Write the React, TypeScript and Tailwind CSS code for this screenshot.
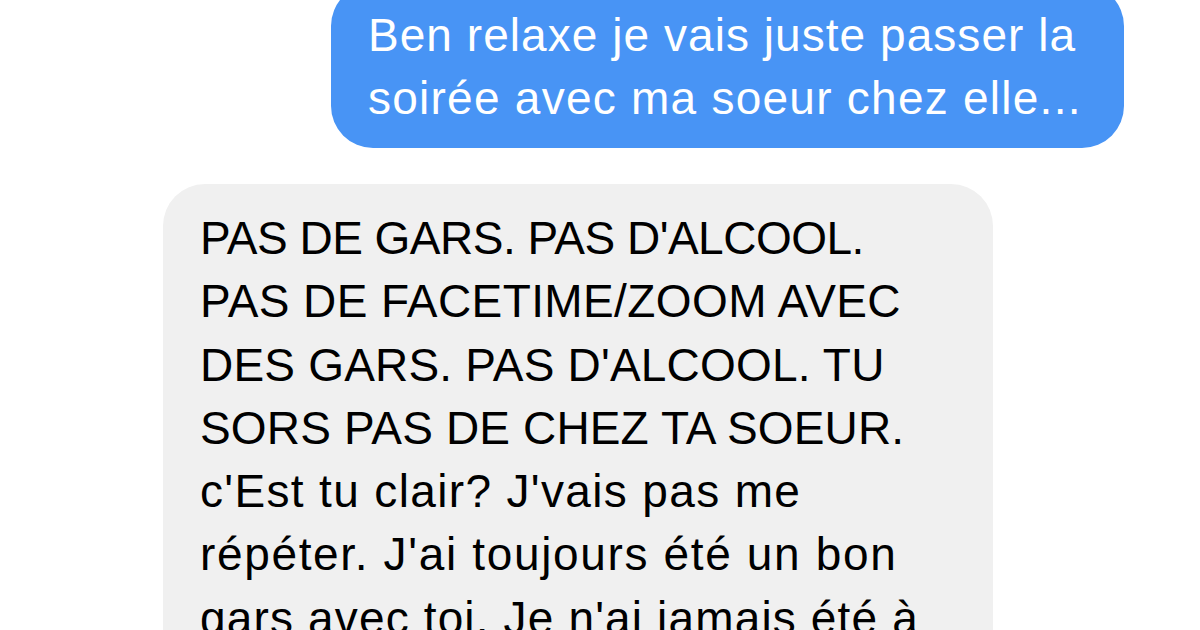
const sent = ["Ben relaxe je vais juste passer la", "soirée avec ma soeur chez elle..."];

// per-line tracking so each line ends where the screenshot's does
const received = [
  { t: "PAS DE GARS. PAS D'ALCOOL.", cls: "tracking-[-0.5px]" },
  { t: "PAS DE FACETIME/ZOOM AVEC", cls: "tracking-[0.4px]" },
  { t: "DES GARS. PAS D'ALCOOL. TU", cls: "tracking-[0.2px]" },
  { t: "SORS PAS DE CHEZ TA SOEUR.", cls: "tracking-[0.15px]" },
  { t: "c'Est tu clair? J'vais pas me", cls: "tracking-[1.35px]" },
  { t: "répéter. J'ai toujours été un bon", cls: "tracking-[1.65px]" },
  { t: "gars avec toi. Je n'ai jamais été à", cls: "tracking-[1.15px]" },
  { t: "toi de décider quoi faire.", cls: "tracking-[1.2px]" },
];

export default function App() {
  return (
    <div
      className="w-[1200px] h-[630px] overflow-hidden bg-white"
      style={{ fontFamily: '"Liberation Sans", Arial, sans-serif' }}
    >
      <div className="flex flex-col">
        {/* outgoing bubble */}
        <div className="flex justify-end pr-[76px] -mt-[16px]">
          <div className="w-[793px] rounded-[42px] bg-[#4894f5] pl-[37px] pr-[20px] pt-[20px] pb-[18px] text-[46px] leading-[63px] text-white">
            <div className="whitespace-nowrap tracking-[1.05px]">{sent[0]}</div>
            <div className="whitespace-nowrap tracking-[1.25px]">{sent[1]}</div>
          </div>
        </div>

        {/* incoming bubble */}
        <div className="flex pl-[163px] mt-[36px]">
          <div className="w-[830px] rounded-[42px] bg-[#f0f0f0] pl-[37px] pt-[23px] pb-[24px] text-[46px] leading-[63.3px] text-black">
            {received.map((l) => (
              <div key={l.t} className={`whitespace-nowrap ${l.cls}`}>
                {l.t}
              </div>
            ))}
          </div>
        </div>
      </div>
    </div>
  );
}
